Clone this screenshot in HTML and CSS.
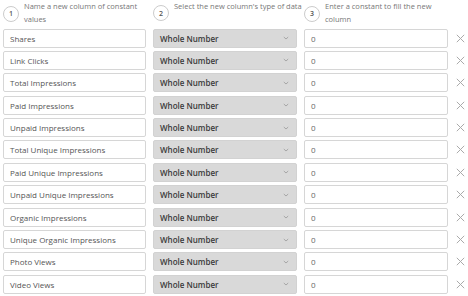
FILE: index.html
```html
<!DOCTYPE html>
<html lang="en">

<head>
    <meta charset="UTF-8">
    <meta name="viewport" content="width=device-width, initial-scale=1.0">
    <title>Constant Columns</title>
    <link rel="stylesheet" href="styles.css">
</head>

<body>
<div class="wrap">
    <div class="head">
        <div class="step"><span class="num">1</span><span class="label">Name a new column of constant values</span></div>
        <div class="step"><span class="num">2</span><span class="label one">Select the new column's type of data</span></div>
        <div class="step"><span class="num">3</span><span class="label">Enter a constant to fill the new column</span></div>
        <div></div>
    </div>
    <div class="rows" id="rows"></div>
</div>

<script>
    const names = ["Shares", "Link Clicks", "Total Impressions", "Paid Impressions", "Unpaid Impressions",
        "Total Unique Impressions", "Paid Unique Impressions", "Unpaid Unique Impressions",
        "Organic Impressions", "Unique Organic Impressions", "Photo Views", "Video Views"];
    const rows = document.getElementById('rows');
    names.forEach(n => {
        const row = document.createElement('div');
        row.className = 'row';
        row.innerHTML =
            '<div class="box name">' + n + '</div>' +
            '<div class="box pick">Whole Number<svg class="chev" width="6" height="4" viewBox="0 0 6 4"><path d="M0.8 1 L3 3 L5.2 1" fill="none" stroke="#999" stroke-width="0.8"/></svg></div>' +
            '<div class="box val">0</div>' +
            '<svg class="del" width="9" height="9" viewBox="0 0 9 9"><path d="M0.8 0.8 L8.2 8.2 M8.2 0.8 L0.8 8.2" stroke="#aaa" stroke-width="1"/></svg>';
        rows.appendChild(row);
    });
</script>
</body>

</html>
```

FILE: styles.css
```css
body {
    margin: 0;
    background: #fff;
    font-family: "Open Sans", sans-serif;
}

.wrap {
    padding: 0 3px;
}

.head,
.row {
    display: grid;
    grid-template-columns: 143px 144px 144px 16px;
    column-gap: 7px;
    align-items: center;
}

.head {
    height: 28.5px;
    align-items: start;
}

.step {
    display: flex;
    align-items: center;
    gap: 5px;
}

.num {
    flex: none;
    width: 14px;
    height: 14px;
    margin-top: 2px;
    border: 1px solid #ccc;
    border-radius: 50%;
    font-size: 7px;
    font-weight: 600;
    color: #555;
    display: flex;
    align-items: center;
    justify-content: center;
}

.label {
    font-size: 7.5px;
    line-height: 12.5px;
    color: #777;
}

.one {
    white-space: nowrap;
    margin-bottom: 12px;
}

.rows {
    display: flex;
    flex-direction: column;
    gap: 3.4px;
}

.box {
    box-sizing: border-box;
    height: 19px;
    border: 1px solid #d6d6d6;
    border-radius: 2px;
    font-size: 8px;
    display: flex;
    align-items: center;
    padding-left: 6px;
    color: #555;
}

.pick {
    background: #d9d9d9;
    border-color: #d2d2d2;
    color: #3a3a3a;
    font-weight: 600;
    justify-content: space-between;
    padding-right: 7px;
}

.val {
    color: #666;
}

.del {
    margin-left: 1px;
}
```
